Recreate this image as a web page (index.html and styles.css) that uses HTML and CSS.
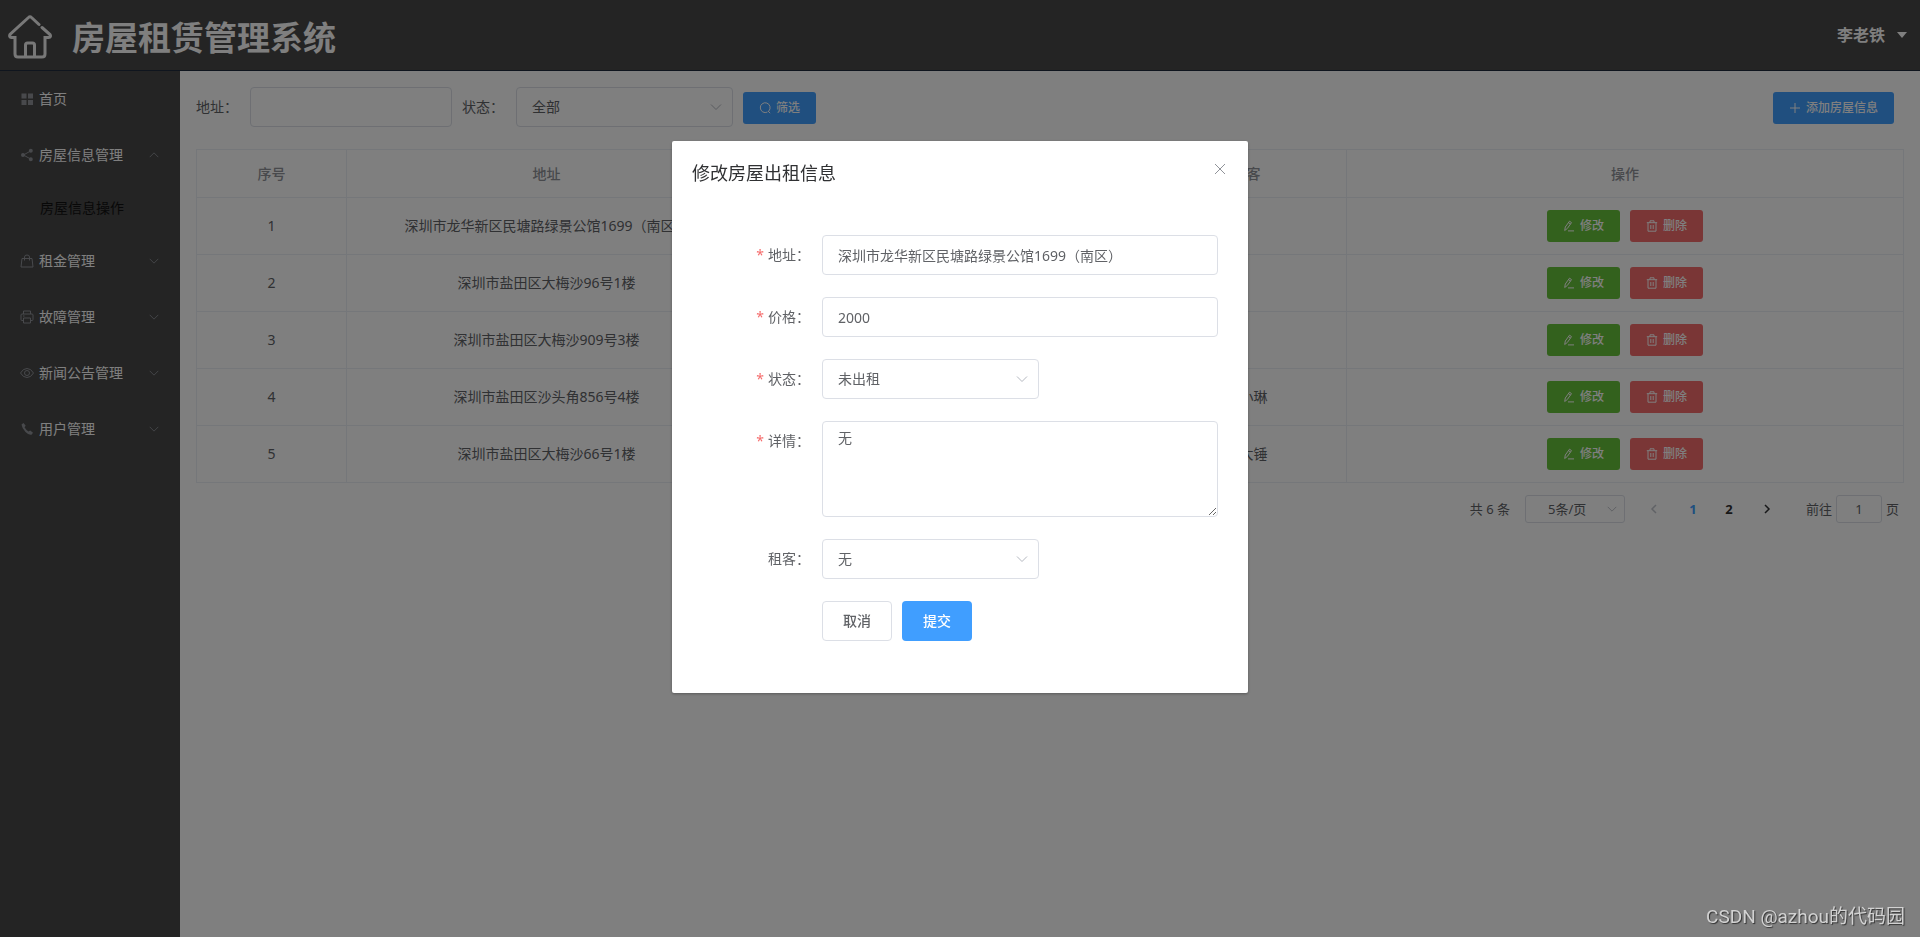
FILE: index.html
```html
<!DOCTYPE html>
<html lang="zh-CN">
<head>
<meta charset="utf-8">
<title>房屋租赁管理系统</title>
<link rel="stylesheet" href="styles.css">
</head>
<body>
<svg class="sprite" aria-hidden="true">
  <symbol id="i-down" viewBox="0 0 14 14"><path d="M2 4.500l5 5 5-5"/></symbol>
  <symbol id="i-up" viewBox="0 0 14 14"><path d="M2 9.500l5-5 5 5"/></symbol>
  <symbol id="i-left" viewBox="0 0 14 14"><path d="M9 3L5 7l4 4"/></symbol>
  <symbol id="i-right" viewBox="0 0 14 14"><path d="M5 3l4 4-4 4"/></symbol>
  <symbol id="i-plus" viewBox="0 0 12 12"><path d="M6 1v10M1 6h10"/></symbol>
  <symbol id="i-close" viewBox="0 0 16 16"><path d="M3 3l10 10M13 3L3 13"/></symbol>
  <symbol id="i-search" viewBox="0 0 12 12"><path d="M8.500 10A4.900 4.900 0 1 1 9.800 9M9 9l2.200 2.200"/></symbol>
  <symbol id="i-edit" viewBox="0 0 12 12"><path d="M2.300 7L6.500 1.200l2 1.400L4.300 8.500l-2.600 2zM5.500 2.600l2 1.400M5 10.900h6"/></symbol>
  <symbol id="i-delete" viewBox="0 0 12 12"><path d="M.8 2.700h10.400M2 2.700v8.500h8V2.700M4 2.700V.8h4v1.900M4.800 5v4M7.200 5v4"/></symbol>
</svg>

<div class="app">
  <header class="topbar">
    <svg class="logo" viewBox="0 0 44 44" aria-hidden="true"><path d="M31 9.500L23.500 2.500Q22 1 20.500 2.500L2 19.500Q.8 22 3.500 22.500H7V39q0 3 3 3h24q3 0 3-3V22.500h3.500Q43.500 22 42 19.500L34 12.500M17.500 42V30q0-2 2-2h5q2 0 2 2v12"/></svg>
    <h1 class="brand">房屋租赁管理系统</h1>
    <button class="user" type="button">李老铁 <span class="caret"></span></button>
  </header>

  <div class="body">
    <nav class="side">
      <a class="item" href="#"><svg class="ico solid" viewBox="0 0 14 14"><path d="M1.500 1.500h5v5h-5zM8 1.500h5v5H8zM1.500 8h5v5h-5zM8 8h5v5H8z"/></svg><span>首页</span></a>
      <a class="item" href="#"><svg class="ico" viewBox="0 0 14 14"><path d="M10.500 3L3.500 7l7 4"/><path class="dot" d="M12.800 2.800a2 2 0 1 1-4 0 2 2 0 0 1 4 0zM5 7a2 2 0 1 1-4 0 2 2 0 0 1 4 0zM12.800 11.200a2 2 0 1 1-4 0 2 2 0 0 1 4 0z"/></svg><span>房屋信息管理</span><svg class="arrow"><use href="#i-up"/></svg></a>
      <a class="item sub" href="#">房屋信息操作</a>
      <a class="item" href="#"><svg class="ico" viewBox="0 0 14 14"><path d="M2 4.500h10l1 8.500H1zM4.500 6.500V3q0-2 2.500-2t2.500 2v3.500"/></svg><span>租金管理</span><svg class="arrow"><use href="#i-down"/></svg></a>
      <a class="item" href="#"><svg class="ico" viewBox="0 0 14 14"><path d="M3.500 4V1h7v3M3.500 10.500H1.800Q1 10.500 1 9.500V5q0-1 1-1h10q1 0 1 1v4.500q0 1-.8 1h-1.700M3.500 8h7v5h-7zM3 6h1.500"/></svg><span>故障管理</span><svg class="arrow"><use href="#i-down"/></svg></a>
      <a class="item" href="#"><svg class="ico" viewBox="0 0 14 14"><path d="M.5 7Q3 2.500 7 2.500T13.500 7Q11 11.500 7 11.500T.5 7zM9.500 7a2.500 2.500 0 1 1-5 0 2.500 2.500 0 0 1 5 0z"/></svg><span>新闻公告管理</span><svg class="arrow"><use href="#i-down"/></svg></a>
      <a class="item" href="#"><svg class="ico solid" viewBox="0 0 14 14"><path d="M1.500 2.500L3.500 1l2.200 2.700-1.200 1.600Q6 8 8.500 9.500l1.700-1 2.800 2.200-1.500 2Q9 13.500 5.500 10T1.500 2.500z"/></svg><span>用户管理</span><svg class="arrow"><use href="#i-down"/></svg></a>
    </nav>

    <main class="main">
      <form class="filters">
        <label for="f-addr">地址：</label>
        <input class="box f-addr" id="f-addr" type="text">
        <label for="f-state">状态：</label>
        <span class="pick"><select class="box" id="f-state"><option>全部</option></select><svg class="chev"><use href="#i-down"/></svg></span>
        <button class="btn small blue" type="button"><svg><use href="#i-search"/></svg>筛选</button>
        <button class="btn small blue add" type="button"><svg><use href="#i-plus"/></svg>添加房屋信息</button>
      </form>

      <table class="grid">
        <colgroup><col class="c-no"><col class="c-addr"><col class="c-mid"><col class="c-mid"><col class="c-mid"><col></colgroup>
        <thead><tr><th>序号</th><th>地址</th><th>价格</th><th>状态</th><th>租客</th><th>操作</th></tr></thead>
        <tbody>
          <tr><td>1</td><td>深圳市龙华新区民塘路绿景公馆1699（南区）</td><td></td><td></td><td></td><td><div class="ops"><button class="btn small green" type="button"><svg><use href="#i-edit"/></svg>修改</button><button class="btn small red" type="button"><svg><use href="#i-delete"/></svg>删除</button></div></td></tr>
          <tr><td>2</td><td>深圳市盐田区大梅沙96号1楼</td><td></td><td></td><td></td><td><div class="ops"><button class="btn small green" type="button"><svg><use href="#i-edit"/></svg>修改</button><button class="btn small red" type="button"><svg><use href="#i-delete"/></svg>删除</button></div></td></tr>
          <tr><td>3</td><td>深圳市盐田区大梅沙909号3楼</td><td></td><td></td><td></td><td><div class="ops"><button class="btn small green" type="button"><svg><use href="#i-edit"/></svg>修改</button><button class="btn small red" type="button"><svg><use href="#i-delete"/></svg>删除</button></div></td></tr>
          <tr><td>4</td><td>深圳市盐田区沙头角856号4楼</td><td></td><td></td><td>张小琳</td><td><div class="ops"><button class="btn small green" type="button"><svg><use href="#i-edit"/></svg>修改</button><button class="btn small red" type="button"><svg><use href="#i-delete"/></svg>删除</button></div></td></tr>
          <tr><td>5</td><td>深圳市盐田区大梅沙66号1楼</td><td></td><td></td><td>王大锤</td><td><div class="ops"><button class="btn small green" type="button"><svg><use href="#i-edit"/></svg>修改</button><button class="btn small red" type="button"><svg><use href="#i-delete"/></svg>删除</button></div></td></tr>
        </tbody>
      </table>

      <div class="pager">
        <span class="total">共 6 条</span>
        <span class="pick size"><select class="box" aria-label="每页条数"><option>5条/页</option></select><svg class="chev"><use href="#i-down"/></svg></span>
        <button class="pg off" type="button" aria-label="上一页"><svg><use href="#i-left"/></svg></button>
        <button class="pg on" type="button">1</button>
        <button class="pg" type="button">2</button>
        <button class="pg next" type="button" aria-label="下一页"><svg><use href="#i-right"/></svg></button>
        <label class="jump">前往<input class="box" type="text" value="1">页</label>
      </div>
    </main>
  </div>
</div>

<div class="mask">
  <section class="dialog" role="dialog" aria-labelledby="dlg-title">
    <header class="dlg-head">
      <h2 id="dlg-title">修改房屋出租信息</h2>
      <button class="close" type="button" aria-label="关闭"><svg><use href="#i-close"/></svg></button>
    </header>
    <form class="form">
      <label class="req" for="addr">地址：</label>
      <input class="box" id="addr" type="text" value="深圳市龙华新区民塘路绿景公馆1699（南区）">
      <label class="req" for="price">价格：</label>
      <input class="box" id="price" type="text" value="2000">
      <label class="req" for="state">状态：</label>
      <span class="pick"><select class="box" id="state"><option>未出租</option></select><svg class="chev"><use href="#i-down"/></svg></span>
      <label class="req" for="detail">详情：</label>
      <textarea class="box" id="detail">无</textarea>
      <label for="tenant">租客：</label>
      <span class="pick"><select class="box" id="tenant"><option>无</option></select><svg class="chev"><use href="#i-down"/></svg></span>
      <div class="actions">
        <button class="btn plain" type="button">取消</button>
        <button class="btn blue" type="button">提交</button>
      </div>
    </form>
  </section>
</div>
<div class="watermark">CSDN @azhou的代码园</div>
</body>
</html>
```
FILE: styles.css
```css
* { box-sizing: border-box; }
body {
  margin: 0;
  font: 14px/20px "Noto Sans", "Noto Sans CJK SC", sans-serif;
  color: #606266;
}
button, input, select, textarea { font: inherit; color: inherit; }
button { border: 0; background: none; padding: 0; cursor: pointer; }
svg { fill: none; stroke: currentColor; flex: none; }
.sprite { position: absolute; width: 0; height: 0; }

.app { min-height: 100vh; display: flex; flex-direction: column; }
.topbar {
  display: flex;
  align-items: center;
  height: 71px;
  padding: 0 13px 0 8px;
  background: #484848;
  border-bottom: 1px solid #1f2a3c;
  color: #fff;
}
.logo { width: 44px; height: 44px; stroke: #f0f0f0; stroke-width: 3; stroke-linecap: round; margin-top: 3px; }
.brand { margin: 6px 0 0 20px; font-size: 33px; line-height: 40px; font-weight: 700; }
.user { display: flex; align-items: center; gap: 12px; margin-left: auto; font-size: 16px; font-weight: 700; }
.caret { border: 5px solid transparent; border-top: 6px solid #fff; border-bottom: 0; }

.body { flex: 1; display: flex; }
.side { width: 180px; flex: none; background: #484848; }
.item {
  display: flex;
  align-items: center;
  height: 56px;
  padding: 0 20px;
  color: #fff;
  text-decoration: none;
}
.item.sub { height: 50px; padding-left: 40px; color: #111; }
.ico { width: 14px; height: 14px; margin-right: 5px; color: #909399; }
.solid, .dot { fill: currentColor; stroke: none; }
.arrow { width: 12px; height: 12px; margin-left: auto; color: #909399; }

.main { flex: 1; min-width: 0; padding: 16px; }
.box {
  width: 100%;
  height: 40px;
  padding: 0 15px;
  border: 1px solid #dcdfe6;
  border-radius: 4px;
  background: #fff;
  appearance: none;
  outline: 0;
}
.pick { position: relative; width: 217px; }
.chev { position: absolute; right: 10px; top: 13px; width: 14px; height: 14px; color: #b4b8c0; pointer-events: none; }

.filters { display: flex; align-items: center; margin-bottom: 22px; padding-right: 10px; }
.filters label { width: 54px; }
.f-addr { width: 202px; margin-right: 10px; }
.filters .pick { margin-right: 10px; }
.filters .btn { margin-top: 2px; }
.add { margin-left: auto; }

.btn {
  display: inline-flex;
  align-items: center;
  justify-content: center;
  height: 40px;
  padding: 0 21px;
  border-radius: 4px;
  color: #fff;
  font-weight: 500;
}
.btn svg { width: 12px; height: 12px; }
.small { height: 32px; gap: 5px; padding: 0 16px; border-radius: 3px; font-size: 12px; }
.blue { background: #409eff; }
.green { background: #67c23a; }
.red { background: #f56c6c; }
.plain { padding: 0 20px; border: 1px solid #dcdfe6; color: #606266; background: #fff; }

.grid {
  width: 100%;
  table-layout: fixed;
  border-collapse: separate;
  border-spacing: 0;
  border: solid #ebeef5;
  border-width: 1px 0 0 1px;
}
.c-no { width: 150px; }
.c-addr { width: 400px; }
.c-mid { width: 200px; }
.grid th, .grid td {
  height: 57px;
  padding: 0;
  border: solid #ebeef5;
  border-width: 0 1px 1px 0;
  text-align: center;
}
.grid th { height: 48px; color: #909399; font-weight: 500; }
.ops { display: flex; justify-content: center; gap: 10px; }

.pager {
  display: flex;
  align-items: center;
  justify-content: flex-end;
  padding: 12px 5px 0 0;
  font-size: 13px;
}
.pager .box { height: 28px; border-radius: 3px; }
.size { width: 100px; margin: 0 12px 0 15px; }
.size .box { padding: 0 22px; }
.size .chev { width: 12px; height: 12px; right: 7px; top: 8px; }
.pg { display: flex; align-items: center; justify-content: center; width: 36px; height: 28px; color: #303133; font-weight: 700; }
.pg svg { width: 14px; height: 14px; stroke-width: 1.500; }
.pg.off { color: #c0c4cc; width: 34px; margin-right: 4px; }
.pg.on { color: #409eff; }
.pg.next { margin-left: 2px; }
.jump { display: flex; align-items: center; gap: 4px; margin-left: 21px; }
.jump .box { width: 46px; text-align: center; padding: 0 3px; }

.mask {
  position: fixed;
  inset: 0;
  overflow: auto;
  background: rgba(0, 0, 0, .5);
}
.dialog {
  width: 30%;
  min-width: 480px;
  margin: 141px auto 50px;
  background: #fff;
  border-radius: 2px;
  box-shadow: 0 1px 3px rgba(0, 0, 0, .3);
}
.dlg-head { display: flex; justify-content: space-between; padding: 20px 20px 10px; }
.dlg-head h2 { margin: 0; font-size: 18px; line-height: 24px; font-weight: 400; color: #303133; }
.close { height: 16px; color: #909399; }
.close svg { display: block; width: 16px; height: 16px; }
.form {
  display: grid;
  grid-template-columns: 100px 1fr;
  row-gap: 22px;
  padding: 40px 30px 52px 50px;
}
.form > label { padding-right: 12px; line-height: 40px; text-align: right; }
.req::before { content: "*"; color: #f56c6c; margin-right: 4px; }
.form textarea { height: 96px; padding: 5px 15px; line-height: 21px; resize: vertical; display: block; }
.actions { grid-column: 2; display: flex; gap: 10px; }

.watermark {
  position: fixed;
  right: 15px;
  bottom: 7px;
  font: 19px/26px Roboto, "Noto Sans CJK SC", sans-serif;
  color: #d2d2d2;
  text-shadow: 1px 1px 1px #333;
}
```
